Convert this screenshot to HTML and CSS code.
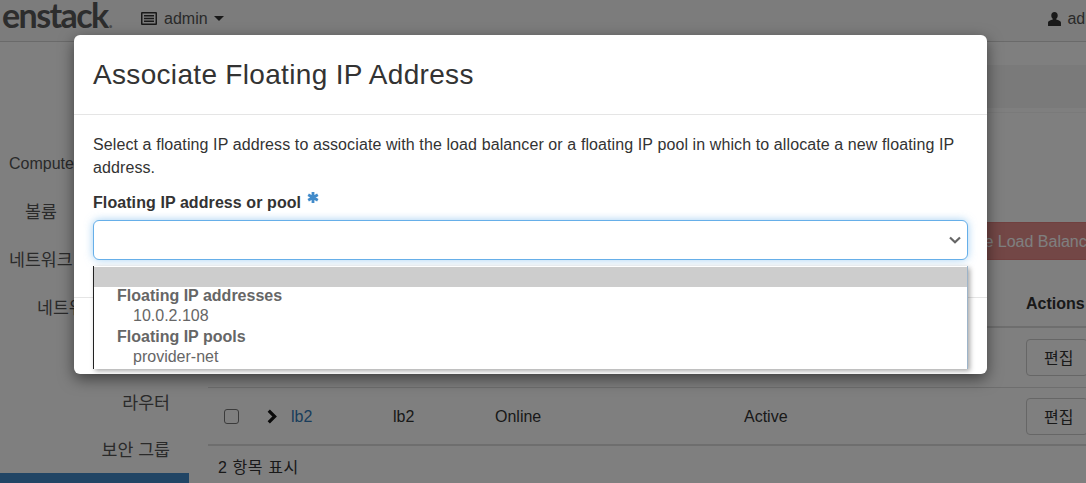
FILE: index.html
```html
<!DOCTYPE html>
<html lang="ko">
<head>
<meta charset="utf-8">
<title>Associate Floating IP Address</title>
<link rel="stylesheet" href="styles.css">
</head>
<body>
<div class="page">
  <header class="navbar">
    <div class="brand">enstack<span class="brand-dot">.</span></div>
    <div class="project">
      <svg class="icon-list" viewBox="0 0 16 13" width="16" height="13"><path fill-rule="evenodd" d="M1 0h14a1 1 0 0 1 1 1v11a1 1 0 0 1-1 1H1a1 1 0 0 1-1-1V1a1 1 0 0 1 1-1zm.5 1.500v10h13v-10zM3 3h10v1.500H3zm0 2.800h10v1.500H3zm0 2.800h10v1.500H3z"/></svg>
      <span>admin</span>
      <span class="caret"></span>
    </div>
    <div class="user">
      <svg class="icon-user" viewBox="0 0 12 13" width="13" height="14"><path d="M6 0c1.900 0 3 1.300 3 3.200 0 1.300-.6 2.500-1.400 3.100v.7c1.800.5 4.400 1.300 4.400 3V13H0v-3c0-1.700 2.600-2.500 4.400-3v-.7C3.600 5.700 3 4.500 3 3.200 3 1.300 4.100 0 6 0z"/></svg>
      <span>admin</span>
    </div>
  </header>

  <div class="layout">
    <nav class="sidebar">
      <div class="nav-item nav-compute">Compute</div>
      <div class="nav-item nav-volume">볼륨</div>
      <div class="nav-item nav-network">네트워크</div>
      <div class="nav-item nav-network-sub">네트워크</div>
      <div class="nav-item nav-leaf"></div>
      <div class="nav-item nav-leaf">라우터</div>
      <div class="nav-item nav-leaf">보안 그룹</div>
      <div class="nav-active"></div>
    </nav>

    <main class="content">
      <div class="breadcrumb"></div>
      <div class="page-rule"></div>
      <div class="toolbar">
        <button class="btn-danger" type="button">Delete Load Balancers</button>
      </div>
      <div class="table-row table-head">
        <div class="col-actions">Actions</div>
      </div>
      <div class="table-row row-first">
        <div class="col-actions"><button class="btn-edit" type="button">편집</button></div>
      </div>
      <div class="table-row row-last">
        <div class="col-check"><span class="checkbox"></span></div>
        <div class="col-toggle">
          <svg viewBox="0 0 10 14" width="11" height="15"><path d="M1.500 1.500 7 7l-5.500 5.500" fill="none" stroke="#141414" stroke-width="3"/></svg>
        </div>
        <div class="col-name"><a class="link">lb2</a></div>
        <div class="col-desc">lb2</div>
        <div class="col-op">Online</div>
        <div class="col-status">Active</div>
        <div class="col-actions"><button class="btn-edit" type="button">편집</button></div>
      </div>
      <div class="table-foot">2 항목 표시</div>
    </main>
  </div>

  <div class="backdrop"></div>

  <section class="modal">
    <div class="modal-header">
      <h1 class="modal-title">Associate Floating IP Address</h1>
    </div>
    <div class="modal-body">
      <p class="modal-text">Select a floating IP address to associate with the load balancer or a floating IP pool in which to allocate a new floating IP address.</p>
      <label class="field-label">Floating IP address or pool
        <svg class="required" viewBox="0 0 12 12" width="12" height="15"><path d="M6 .5v11M1.200 3.200l9.600 5.600M10.800 3.200 1.200 8.800" fill="none" stroke="#428bca" stroke-width="2.800"/></svg>
      </label>
      <div class="select">
        <svg class="select-chevron" viewBox="0 0 12 8" width="12" height="8"><path d="M1 1.500 6 6.300l5-4.800" fill="none" stroke="#666" stroke-width="2.200"/></svg>
      </div>
    </div>
    <div class="modal-footer"></div>

    <div class="dropdown">
      <div class="option-selected"></div>
      <div class="option-group option-first">Floating IP addresses</div>
      <div class="option">10.0.2.108</div>
      <div class="option-group">Floating IP pools</div>
      <div class="option">provider-net</div>
    </div>
  </section>
</div>
</body>
</html>
```
FILE: styles.css
```css
* { box-sizing: border-box; }
html, body { margin: 0; padding: 0; }
body {
  font-family: "Liberation Sans", "Noto Sans CJK KR", sans-serif;
  font-size: 16px;
  color: #333;
  background: #fff;
}
.page {
  position: relative;
  width: 1086px;
  height: 483px;
  overflow: hidden;
  background: #fff;
}

/* navbar */
.navbar {
  display: flex;
  align-items: center;
  height: 42px;
  padding-bottom: 4px;
  background: #f8f8f8;
  border-bottom: 1px solid #d4d4d4;
}
.brand {
  width: 141px;
  flex: none;
  padding-left: 2px;
  font-family: Lato, "Liberation Sans", sans-serif;
  font-weight: 700;
  font-size: 34px;
  line-height: 32px;
  color: #5a5a5a;
  letter-spacing: -1.6px;
  margin-top: -2px;
}
.brand-dot { font-size: 18px; color: #999; margin-left: 1px; }
.project {
  display: flex;
  align-items: center;
  gap: 7px;
  color: #555;
}
.icon-list, .icon-user { fill: #333; }
.caret {
  width: 0;
  height: 0;
  border-left: 5px solid transparent;
  border-right: 5px solid transparent;
  border-top: 5px solid #333;
  margin-left: -1px;
}
.user {
  display: flex;
  align-items: center;
  gap: 6px;
  margin-left: auto;
  margin-right: -25px;
  color: #555;
}

/* sidebar */
.layout { display: flex; align-items: stretch; }
.sidebar {
  width: 189px;
  flex: none;
  height: 441px;
  padding-top: 98px;
  display: flex;
  flex-direction: column;
  font-size: 17.300px;
  color: #555;
  white-space: nowrap;
  overflow: hidden;
}
.nav-item { flex: none; height: 48px; line-height: 48px; }
.nav-compute { padding-left: 9px; font-size: 16px; }
.nav-volume { padding-left: 25px; }
.nav-network { padding-left: 9px; }
.nav-network-sub { padding-left: 37px; }
.nav-leaf { height: 47px; line-height: 49px; text-align: right; padding-right: 19px; }
.nav-active {
  flex: none;
  height: 20px;
  background: #428bca;
}

/* main */
.content { flex: 1; min-width: 0; padding-left: 19px; }
.breadcrumb { height: 43px; margin-top: 23px; background: #f5f5f5; }
.page-rule { height: 1px; margin-top: 4px; background: #f4f4f4; }
.toolbar {
  display: flex;
  justify-content: flex-end;
  height: 39px;
  margin-top: 109px;
  margin-right: -36px;
}
.btn-danger {
  height: 38px;
  padding: 1px 12px 0;
  border: 1px solid #d43f3a;
  border-radius: 4px;
  background: #d9534f;
  color: #fff;
  font: 16px "Liberation Sans", sans-serif;
  opacity: .65;
  white-space: nowrap;
}
.table-row {
  display: grid;
  grid-template-columns: 43px 24px 102px 102px 249px 282px 76px;
  padding-left: 16px;
  align-items: center;
}
.table-head {
  height: 67px;
  padding-top: 21px;
  border-bottom: 2px solid #ddd;
  font-weight: 700;
  color: #333;
}
.table-head .col-actions, .row-first .col-actions { grid-column: 7; }
.row-first { height: 60px; border-bottom: 1px solid #ddd; }
.row-last { height: 58px; border-bottom: 2px solid #ddd; }
.col-actions { white-space: nowrap; }
.checkbox {
  display: block;
  width: 15px;
  height: 15px;
  border: 1px solid #767676;
  border-radius: 3px;
  background: #fff;
}
.col-toggle { display: flex; align-items: center; }
.col-name, .col-desc, .col-op, .col-status { padding-top: 1px; }
.link { color: #337ab7; }
.btn-edit {
  display: block;
  width: 62px;
  height: 37px;
  padding: 0 0 1px 17px;
  text-align: left;
  border: 1px solid #ccc;
  border-radius: 4px;
  background: #fff;
  color: #333;
  font: 16px "Liberation Sans", "Noto Sans CJK KR", sans-serif;
  white-space: nowrap;
}
.table-foot { padding: 11px 0 0 10px; line-height: 22px; color: #333; letter-spacing: .6px; }

/* overlay */
.backdrop {
  position: absolute;
  inset: 0;
  background: rgba(0, 0, 0, .5);
}
.modal {
  position: absolute;
  left: 74px;
  top: 35px;
  width: 913px;
  height: 339px;
  background: #fff;
  border-radius: 6px;
  box-shadow: 0 5px 15px rgba(0, 0, 0, .5);
  display: flex;
  flex-direction: column;
}
.modal-header { height: 80px; border-bottom: 1px solid #e5e5e5; padding: 20px 19px 0; }
.modal-title {
  margin: 0;
  font-size: 28px;
  font-weight: 400;
  line-height: 39px;
  letter-spacing: .32px;
  color: #333;
}
.modal-body { padding: 18px 19px 0; height: 183px; border-bottom: 1px solid #e5e5e5; }
.modal-text { margin: 0; line-height: 23px; letter-spacing: .1px; color: #333; }
.field-label {
  display: flex;
  align-items: flex-start;
  gap: 6px;
  margin-top: 13px;
  font-weight: 700;
  font-size: 16px;
  line-height: 22px;
  letter-spacing: .08px;
}
.required { margin-top: -2px; }
.select {
  position: relative;
  display: flex;
  align-items: center;
  justify-content: flex-end;
  height: 40px;
  margin-top: 6px;
  padding-right: 6px;
  border: 1px solid #66afe9;
  border-radius: 6px;
  box-shadow: 0 0 8px rgba(102, 175, 233, .6);
  background: #fff;
}
.dropdown {
  position: absolute;
  left: 19px;
  top: 231px;
  width: 875px;
  height: 103px;
  padding-top: 1px;
  background: #fff;
  border-left: 1px solid #222;
  border-right: 1px solid #9db4c9;
  box-shadow: 2px 2px 5px rgba(0, 0, 0, .35);
  color: #666;
  font-size: 16px;
  line-height: 20.400px;
}
.option-selected { height: 20px; background: #cdcdcd; }
.option-group { padding-left: 23px; font-weight: 700; }
.option-first { margin-top: -1px; }
.option { padding-left: 39px; }
```
